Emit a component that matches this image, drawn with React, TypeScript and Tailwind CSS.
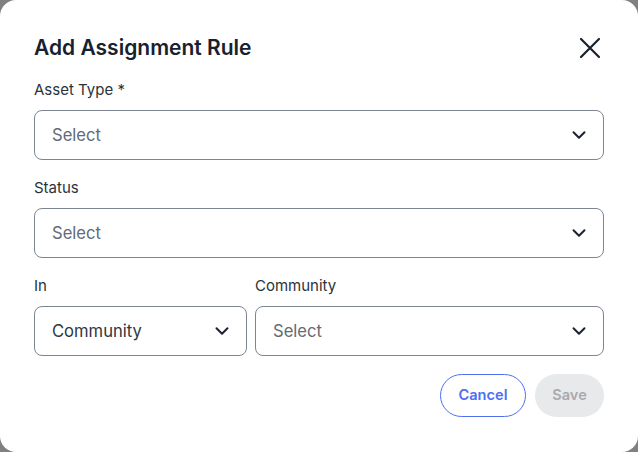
import { ChevronDown } from "lucide-react";

const font = { fontFamily: "Inter, 'Noto Sans', sans-serif" };

function SelectBox({ value, placeholder, className = "" }: { value?: string; placeholder?: string; className?: string }) {
    return (
        <div className={`h-[50px] flex items-center justify-between pl-[17px] pr-[13px] border border-[#7d8592] rounded-lg bg-white ${className}`}>
            <span className={`text-[16.6px] ${value ? "text-[#2f3742]" : "text-[#636b76]"}`}>{value ?? placeholder}</span>
            <ChevronDown size={22} strokeWidth={2.2} className="text-[#1b2330]" />
        </div>
    );
}

function Label({ children }: { children: React.ReactNode }) {
    return <div className="text-[15px] leading-5 text-[#2b323c] mb-[10px]">{children}</div>;
}

export default function App() {
    return (
        <div className="w-[638px] h-[452px] bg-[#808080]" style={font}>
            <div className="w-full h-full bg-white rounded-2xl px-[34px] pt-[34px]">
                {/* Header */}
                <div className="flex items-center justify-between h-7 mb-[18px]">
                    <h1 className="text-[21px] font-semibold text-[#18212d] leading-7">Add Assignment Rule</h1>
                    <svg width="22" height="22" viewBox="0 0 22 22" className="mr-[3px]">
                        <path d="M2 2 L20 20 M20 2 L2 20" stroke="#18212d" strokeWidth="2.2" strokeLinecap="round" />
                    </svg>
                </div>

                <Label>Asset Type *</Label>
                <SelectBox placeholder="Select" />

                <div className="mt-[18px]">
                    <Label>Status</Label>
                    <SelectBox placeholder="Select" />
                </div>

                <div className="flex gap-2 mt-[18px]">
                    <div className="w-[213px]">
                        <Label>In</Label>
                        <SelectBox value="Community" />
                    </div>
                    <div className="flex-1">
                        <Label>Community</Label>
                        <SelectBox placeholder="Select" />
                    </div>
                </div>

                {/* Actions */}
                <div className="flex justify-end gap-[9px] mt-[18px]">
                    <button className="w-[86px] h-[43px] rounded-full border border-[#4f6ef2] text-[#4f6ef2] text-[14.6px] font-semibold">
                        Cancel
                    </button>
                    <button className="w-[69px] h-[43px] rounded-full bg-[#e8e9eb] text-[#a8aaae] text-[14.6px] font-semibold">
                        Save
                    </button>
                </div>
            </div>
        </div>
    );
}
